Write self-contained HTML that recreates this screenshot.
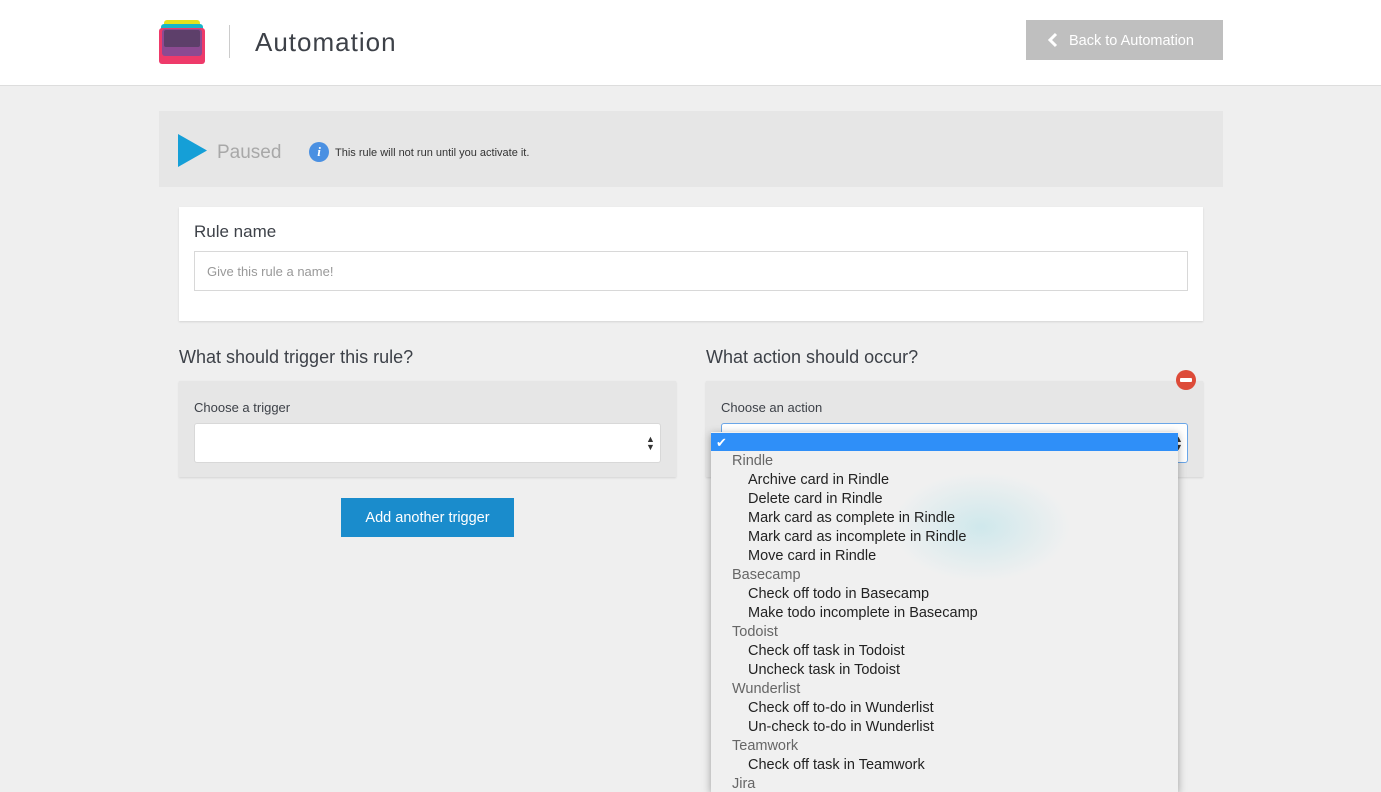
<!DOCTYPE html>
<html><head><style>
body{margin:0;width:1381px;height:786px;overflow:hidden;background:#efefef;font-family:"Liberation Sans",sans-serif;position:relative}
.a{position:absolute}
.hdr{left:0;top:0;width:1381px;height:85px;background:#fff;border-bottom:1px solid #ddd}
.opt{position:absolute;left:0;height:19px;line-height:19px;font-size:14.5px;color:#222;white-space:nowrap}
.g{padding-left:21px;color:#666}
.i{padding-left:37px}
</style></head><body>
<div class="a hdr"></div>
<div class="a" style="left:164px;top:20px;width:36px;height:12px;background:#e3e21d;border-radius:3px"></div>
<div class="a" style="left:161px;top:24px;width:42px;height:12px;background:#17b6c9;border-radius:3px"></div>
<div class="a" style="left:159px;top:28px;width:46px;height:36px;background:#ee3a6a;border-radius:3px"></div>
<div class="a" style="left:162px;top:29px;width:40px;height:27px;background:#8c4a92;border-radius:3px"></div>
<div class="a" style="left:164px;top:30px;width:36px;height:17px;background:#5d3f6a;border-radius:2px"></div>
<div class="a" style="left:229px;top:25px;width:1px;height:33px;background:#ccc"></div>
<div class="a" style="left:255px;top:27px;font-size:26px;color:#3d4148;letter-spacing:1px">Automation</div>
<div class="a" style="left:1026px;top:20px;width:197px;height:40px;background:#bfbfbf;color:#fff;font-size:14.5px;line-height:42px">
<svg class="a" style="left:21px;top:12px" width="12" height="16" viewBox="0 0 12 16"><path d="M9 2 L3 8 L9 14" stroke="#fff" stroke-width="3" fill="none"/></svg>
<span class="a" style="left:43px">Back to Automation</span></div>

<div class="a" style="left:159px;top:111px;width:1064px;height:76px;background:#e6e6e6"></div>
<svg class="a" style="left:178px;top:134px" width="30" height="33"><path d="M0 0 L29 16.5 L0 33Z" fill="#159fd7"/></svg>
<div class="a" style="left:217px;top:142px;font-size:19px;color:#a8a8a8">Paused</div>
<div class="a" style="left:309px;top:142px;width:20px;height:20px;border-radius:50%;background:#4a90e2;color:#fff;font:italic bold 13px 'Liberation Serif',serif;text-align:center;line-height:20px">i</div>
<div class="a" style="left:335px;top:147px;font-size:11px;color:#333">This rule will not run until you activate it.</div>

<div class="a" style="left:179px;top:207px;width:1024px;height:114px;background:#fff;box-shadow:0 1px 2px rgba(0,0,0,.12)"></div>
<div class="a" style="left:194px;top:222px;font-size:17px;color:#3d4148">Rule name</div>
<div class="a" style="left:194px;top:251px;width:992px;height:38px;border:1px solid #d8d8d8;background:#fff"></div>
<div class="a" style="left:207px;top:264px;font-size:13px;color:#999">Give this rule a name!</div>

<div class="a" style="left:179px;top:347px;font-size:18px;color:#3d4148">What should trigger this rule?</div>
<div class="a" style="left:706px;top:347px;font-size:18px;color:#3d4148">What action should occur?</div>
<div class="a" style="left:179px;top:381px;width:497px;height:96px;background:#e6e6e6;box-shadow:0 1px 2px rgba(0,0,0,.12)"></div>
<div class="a" style="left:194px;top:400px;font-size:13px;color:#3d4148">Choose a trigger</div>
<div class="a" style="left:194px;top:423px;width:465px;height:38px;border:1px solid #d8d8d8;background:#fff;border-radius:3px"></div>
<div class="a" style="left:646px;top:435px;font-size:9px;line-height:8px;color:#333">▲<br>▼</div>
<div class="a" style="left:341px;top:498px;width:173px;height:39px;background:#1a8ccc;color:#fff;font-size:14.5px;text-align:center;line-height:41px">Add another trigger</div>

<div class="a" style="left:706px;top:381px;width:497px;height:96px;background:#e6e6e6;box-shadow:0 1px 2px rgba(0,0,0,.12)"></div>
<div class="a" style="left:1176px;top:370px;width:20px;height:20px;border-radius:50%;background:#dd4b39"><div class="a" style="left:4px;top:8px;width:12px;height:4px;background:#fff;border-radius:1px"></div></div>
<div class="a" style="left:721px;top:400px;font-size:13px;color:#3d4148">Choose an action</div>
<div class="a" style="left:721px;top:423px;width:465px;height:38px;border:1px solid #6aa6e8;background:#fff;border-radius:3px"></div>
<div class="a" style="left:1174px;top:435px;font-size:9px;line-height:8px;color:#333">▲<br>▼</div>

<div class="a" style="left:711px;top:432px;width:467px;height:360px;background:#f0f0f0;box-shadow:0 2px 8px rgba(0,0,0,.35);overflow:hidden">
<div class="a" style="left:180px;top:40px;width:180px;height:110px;border-radius:50%;background:radial-gradient(#cfe8ec,rgba(240,240,240,0) 70%)"></div>
<div class="opt" style="top:1px;width:467px;height:18px;background:#2f8ff8;color:#fff;padding-left:5px;font-size:13px">✔</div>
<div class="opt g" style="top:20px">Rindle</div>
<div class="opt i" style="top:39px">Archive card in Rindle</div>
<div class="opt i" style="top:58px">Delete card in Rindle</div>
<div class="opt i" style="top:77px">Mark card as complete in Rindle</div>
<div class="opt i" style="top:96px">Mark card as incomplete in Rindle</div>
<div class="opt i" style="top:115px">Move card in Rindle</div>
<div class="opt g" style="top:134px">Basecamp</div>
<div class="opt i" style="top:153px">Check off todo in Basecamp</div>
<div class="opt i" style="top:172px">Make todo incomplete in Basecamp</div>
<div class="opt g" style="top:191px">Todoist</div>
<div class="opt i" style="top:210px">Check off task in Todoist</div>
<div class="opt i" style="top:229px">Uncheck task in Todoist</div>
<div class="opt g" style="top:248px">Wunderlist</div>
<div class="opt i" style="top:267px">Check off to-do in Wunderlist</div>
<div class="opt i" style="top:286px">Un-check to-do in Wunderlist</div>
<div class="opt g" style="top:305px">Teamwork</div>
<div class="opt i" style="top:324px">Check off task in Teamwork</div>
<div class="opt g" style="top:343px">Jira</div>
</div>
</body></html>
